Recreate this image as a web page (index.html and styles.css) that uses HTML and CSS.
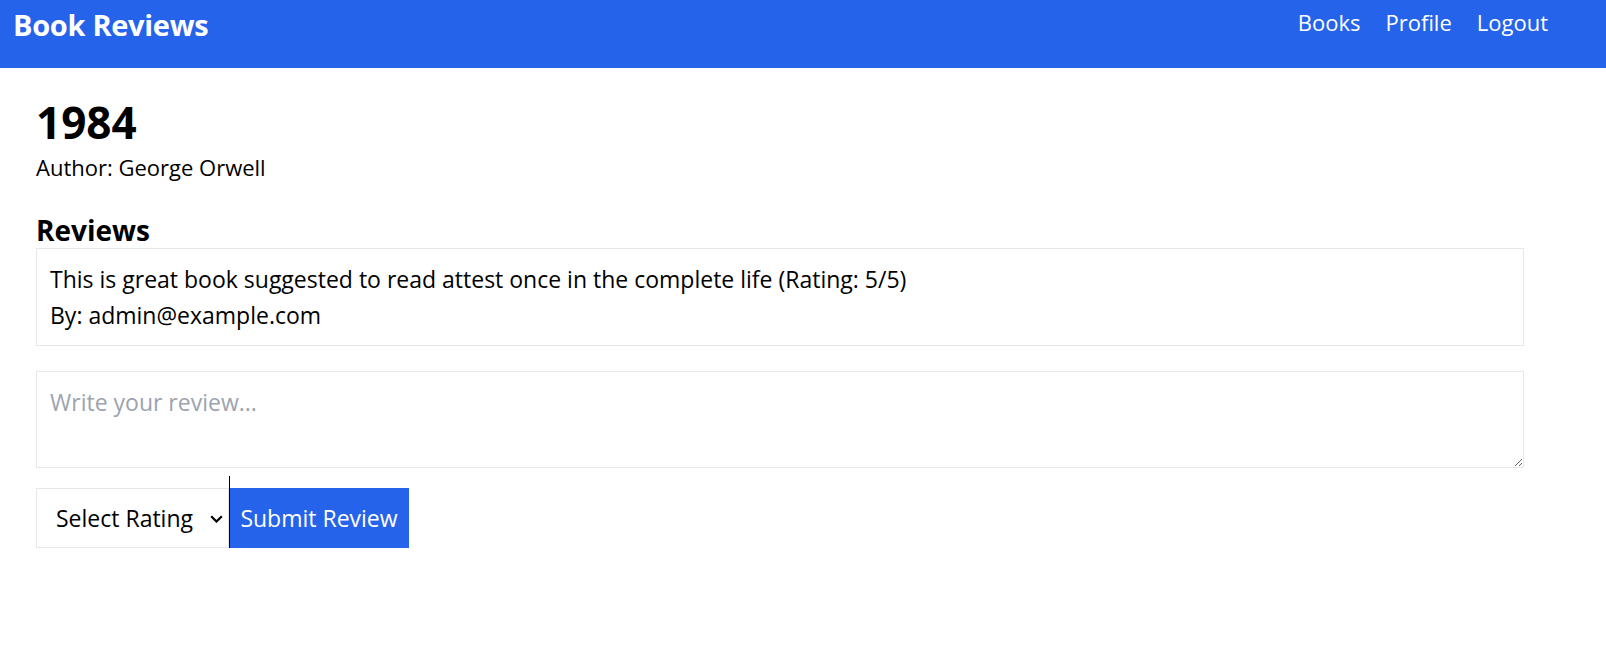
FILE: index.html
```html
<!DOCTYPE html>
<html lang="en">
<head>
<meta charset="utf-8">
<title>Book Reviews</title>
<link rel="stylesheet" href="styles.css">
</head>
<body>
<header class="topbar">
  <div class="brand">Book Reviews</div>
  <nav class="nav">
    <a href="#" class="nav-link">Books</a>
    <a href="#" class="nav-link">Profile</a>
    <a href="#" class="nav-link">Logout</a>
  </nav>
</header>
<main class="page">
  <h1 class="book-title">1984</h1>
  <p class="author">Author: George Orwell</p>
  <h2 class="section-title">Reviews</h2>
  <div class="review">
    <p class="review-line">This is great book suggested to read attest once in the complete life (Rating: 5/5)</p>
    <p class="review-line">By: admin@example.com</p>
  </div>
  <form class="review-form">
    <textarea class="review-input" placeholder="Write your review..."></textarea>
    <div class="form-row">
      <div class="select-wrap">
        <select class="rating-select">
          <option>Select Rating</option>
          <option>1</option>
          <option>2</option>
          <option>3</option>
          <option>4</option>
          <option>5</option>
        </select>
        <svg class="chevron" width="13" height="8" viewBox="0 0 13 8"><path d="M1.2 1.2 L6.5 6.5 L11.8 1.2" fill="none" stroke="#000" stroke-width="2.2"/></svg>
      </div>
      <button type="button" class="submit-btn">Submit Review</button>
    </div>
  </form>
</main>
</body>
</html>
```
FILE: styles.css
```css
* { box-sizing: border-box; }
html, body { margin: 0; padding: 0; background: #fff; }
body {
  font-family: "Open Sans", "Noto Sans", sans-serif;
  color: #000;
}
.topbar {
  height: 68px;
  background: #2563eb;
  color: #fff;
  display: flex;
  justify-content: space-between;
  align-items: flex-start;
  padding: 0 58px 0 13px;
}
.brand {
  font-size: 29px;
  font-weight: 700;
  line-height: 42px;
  margin-top: 4px;
  letter-spacing: -0.3px;
}
.nav {
  display: flex;
  gap: 25px;
  margin-top: 5px;
}
.nav-link {
  color: #fff;
  text-decoration: none;
  font-size: 22px;
  line-height: 34px;
}
.page {
  padding: 24px 82px 0 36px;
}
.book-title {
  margin: 0;
  font-size: 44px;
  font-weight: 700;
  line-height: 60px;
}
.author {
  margin: 0;
  font-size: 22px;
  line-height: 30px;
}
.section-title {
  margin: 31px 0 0;
  font-size: 28px;
  font-weight: 700;
  line-height: 34px;
}
.review {
  border: 1px solid #e5e7eb;
  padding: 12px 12px 12px 13px;
  margin-top: 1px;
}
.review-line {
  margin: 0;
  font-size: 23px;
  line-height: 36px;
}
.review-form {
  margin-top: 25px;
}
.review-input {
  display: block;
  width: 100%;
  height: 97px;
  border: 1px solid #e5e7eb;
  padding: 13px 13px 10px;
  font-family: inherit;
  font-size: 23px;
  line-height: 34px;
  color: #000;
  border-radius: 0;
  margin: 0;
}
.review-input::placeholder { color: #9ca3af; }
.form-row {
  display: flex;
  margin-top: 20px;
}
.select-wrap {
  position: relative;
  width: 193px;
  height: 60px;
}
.rating-select {
  appearance: none;
  -webkit-appearance: none;
  width: 100%;
  height: 100%;
  border: 1px solid #e5e7eb;
  border-radius: 0;
  background: #fff;
  font-family: inherit;
  font-size: 23px;
  color: #000;
  padding: 0 0 0 19px;
  margin: 0;
}
.chevron {
  position: absolute;
  left: 174px;
  top: 27px;
  pointer-events: none;
}
.submit-btn {
  position: relative;
  width: 180px;
  height: 60px;
  border: 0;
  border-radius: 0;
  background: #2563eb;
  color: #fff;
  font-family: inherit;
  font-size: 23px;
  padding: 0;
  margin: 0;
}
.submit-btn::before {
  content: "";
  position: absolute;
  left: 0;
  top: -12px;
  width: 1px;
  height: 72px;
  background: #000;
}
```
